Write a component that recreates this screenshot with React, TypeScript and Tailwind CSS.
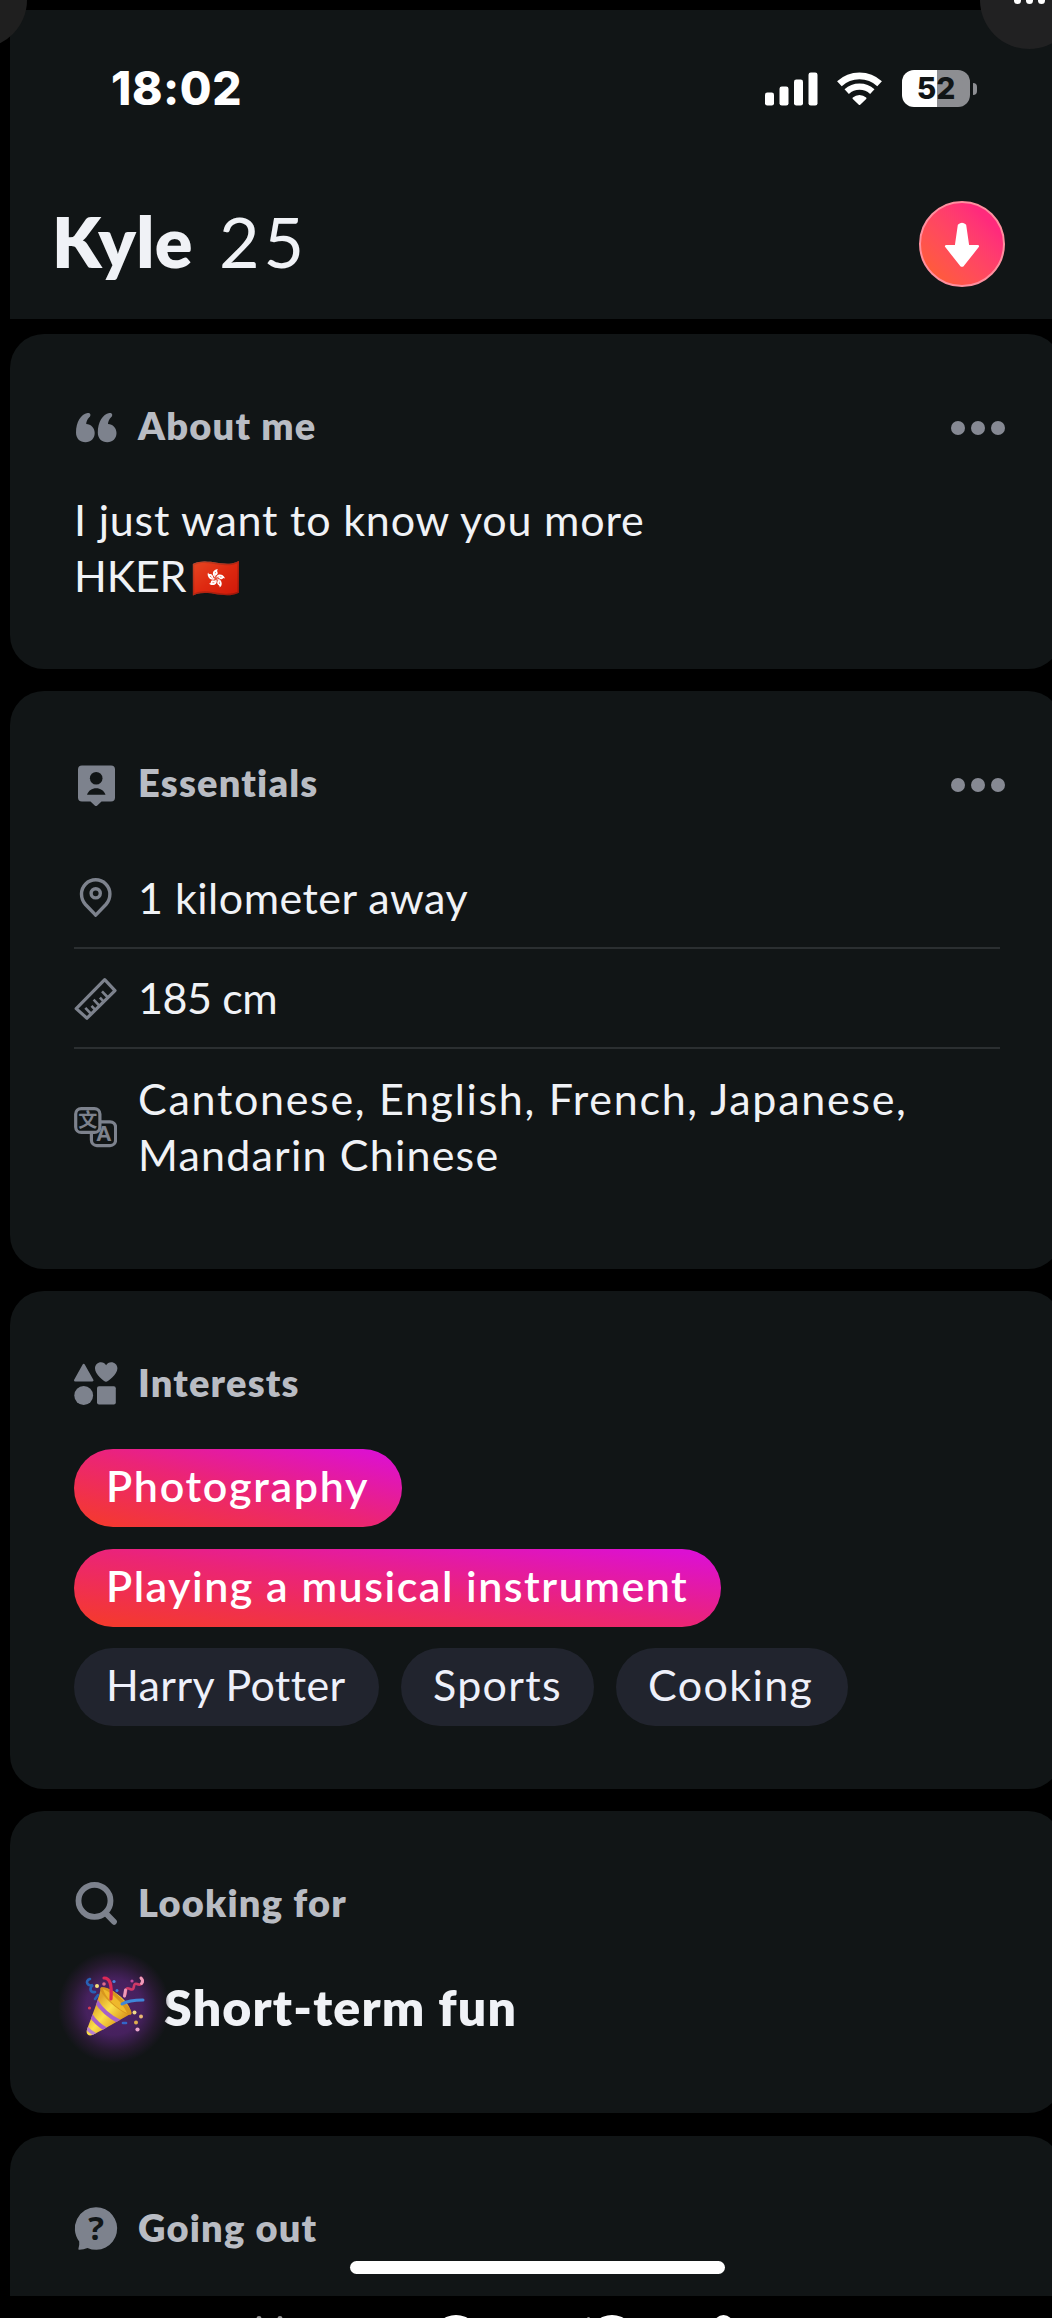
import type React from "react";

const ICON = "#7d828d";
const CARD = "#111516";

const QuoteIcon = () => (
	<svg width="43" height="43" viewBox="0 0 43 43" fill={ICON}>
		<path d="M2 28.5C2 18 7 10.3 13.5 9C16.8 8.5 17.2 11.3 15.3 13.3C13.3 15.4 12.3 17.6 12.2 20C17 20.2 20.7 24 20.7 29C20.7 34.4 16.8 38.3 11.5 38.3C6 38.3 2 34.5 2 28.5Z" />
		<path d="M23.8 28.5C23.8 18 28.8 10.3 35.3 9C38.6 8.5 39 11.3 37.1 13.3C35.1 15.4 34.1 17.6 34 20C38.8 20.2 42.5 24 42.5 29C42.5 34.4 38.6 38.3 33.3 38.3C27.8 38.3 23.8 34.5 23.8 28.5Z" />
	</svg>
);

const ProfileIcon = () => (
	<svg width="43" height="43" viewBox="0 0 43 43" className="overflow-visible">
		<path
			fill={ICON}
			d="M8 4.500H37A4 4 0 0 1 41 8.500V36.500A4 4 0 0 1 37 40.500H27.500L23 44.700Q22 45.400 21 44.700L16.500 40.500H8A4 4 0 0 1 4 36.500V8.500A4 4 0 0 1 8 4.500Z"
		/>
		<circle cx="22.2" cy="17.2" r="6.3" fill={CARD} />
		<path fill={CARD} d="M13 33.800C14.500 29.500 18 27.200 22.200 27.200S30 29.500 31.500 33.800Z" />
	</svg>
);

const ShapesIcon = () => (
	<svg width="43" height="43" viewBox="0 0 43 43" fill={ICON} className="overflow-visible">
		<path
			d="M9.700 4L18.300 19.300H1.200Z"
			stroke={ICON}
			strokeWidth="2.4"
			strokeLinejoin="round"
		/>
		<path d="M32 20.700C30 20.700 21 13.500 21 7.500C21 3.800 23.800 1.300 27 1.300C29.200 1.300 31 2.400 32.100 4.300C33.200 2.400 35 1.300 37.200 1.300C40.500 1.300 43.400 3.800 43.400 7.500C43.400 13.500 34 20.700 32 20.700Z" />
		<circle cx="9.7" cy="34.5" r="9.4" />
		<rect x="23" y="25.3" width="18.8" height="18.3" rx="2" />
	</svg>
);

const SearchIcon = () => (
	<svg width="43" height="43" viewBox="0 0 43 43" fill="none" stroke={ICON} className="overflow-visible">
		<circle cx="20.5" cy="19.8" r="16" strokeWidth="5.8" />
		<path d="M32 32.500L40 40.800" strokeWidth="5.8" strokeLinecap="round" />
	</svg>
);

const QuestionIcon = () => (
	<svg width="43" height="43" viewBox="0 0 43 43" className="overflow-visible">
		<path
			fill={ICON}
			d="M22.200 1.200A21 21.300 0 1 1 13.500 41.900Q9.500 43.600 5.500 43.800Q3.700 43.700 4.500 42.200Q5.600 38.800 5.200 35.500A21 21.300 0 0 1 22.200 1.200Z"
		/>
		<text
			x="22.2"
			y="34.2"
			textAnchor="middle"
			fill={CARD}
			className="font-['Open_Sans',sans-serif] text-[33px] font-bold"
		>
			?
		</text>
	</svg>
);

const PinIcon = () => (
	<svg width="43" height="43" viewBox="0 0 43 43" fill="none" stroke={ICON} strokeWidth="3.4">
		<path
			strokeLinejoin="round"
			d="M21.700 39.200L11.500 28.500C8.700 25.400 7.500 22 7.500 18A14.200 14.200 0 0 1 35.900 18C35.900 22 34.700 25.400 31.900 28.500Z"
		/>
		<circle cx="21.7" cy="17.3" r="4.6" />
	</svg>
);

const RulerIcon = () => (
	<svg width="43" height="43" viewBox="0 0 43 43" fill="none" stroke={ICON} strokeWidth="3.2">
		<path strokeLinejoin="round" d="M2.200 31.600L30.700 2.700L41 13.600L13 41.200Z" />
		<path
			strokeWidth="2.6"
			d="M17.200 37L11.300 30.800M21.300 32.900L17.500 28.900M25.500 28.800L19.600 22.600M29.700 24.700L25.900 20.700M33.900 20.500L28 14.300"
		/>
	</svg>
);

const LanguageIcon = () => (
	<svg width="43" height="43" viewBox="0 0 43 43" fill={CARD} stroke={ICON} strokeWidth="3.2">
		<rect x="17.4" y="16.8" width="24.2" height="23.8" rx="5.5" />
		<rect x="1.7" y="3.6" width="24.2" height="23.8" rx="5.5" />
		<text
			x="13.8"
			y="22"
			textAnchor="middle"
			fill={ICON}
			stroke="none"
			className="font-['Noto_Sans_CJK_SC',sans-serif] text-[19px] font-bold"
		>
			文
		</text>
		<text
			x="29.8"
			y="36"
			textAnchor="middle"
			fill={ICON}
			stroke="none"
			className="font-['Lato',sans-serif] text-[20px] font-extrabold"
		>
			A
		</text>
	</svg>
);

const PartyPopper = () => (
	<svg width="64" height="64" viewBox="0 0 64 64" fill="none" strokeLinecap="round" className="relative">
		<defs>
			<linearGradient id="cone" x1="14" y1="28" x2="38" y2="48" gradientUnits="userSpaceOnUse">
				<stop offset="0" stopColor="#e0a52a" />
				<stop offset="0.45" stopColor="#fbe04a" />
				<stop offset="1" stopColor="#dd9a1e" />
			</linearGradient>
			<clipPath id="coneClip">
				<path d="M19 12.500C17.500 22 9 44 4.700 55.500C4 59.500 7 61.500 10.500 60C21 55 38 45 49 38.500C50.500 30 31 11.500 19 12.500Z" />
			</clipPath>
		</defs>
		<g clipPath="url(#coneClip)">
			<rect width="64" height="64" fill="url(#cone)" />
			<path d="M14 26Q22 39 38 47" stroke="#a560c9" strokeWidth="4.2" />
			<path d="M8 39Q14 49 25 55" stroke="#a560c9" strokeWidth="4.2" />
			<path d="M3 51Q7 56 14 60" stroke="#b982cf" strokeWidth="3.5" />
		</g>
		<path d="M19 12.500C24 10.500 34 17 41 25S51 38 49 39.500S38 36 30 29S16 14 19 12.500Z" fill="#d8961d" />
		<path d="M21 14C29 17 41 28 45 38C37 35 24 24 21 14Z" fill="#efb92c" />
		<path d="M22 3C28 3 30 9 29 24" stroke="#dd2a57" strokeWidth="3.2" />
		<path d="M40 29C46 25.500 53 25 61 25" stroke="#3f86d8" strokeWidth="3" />
		<path d="M59 3C63 7 59 11 55 9C50 7 54 17 48 14C42 11 45 19 42.500 21" stroke="#cf3a67" strokeWidth="2.6" />
		<path d="M59 3C61 5 61 7 59.500 8.500M43.500 15L42.500 21" stroke="#ee9ab9" strokeWidth="3" />
		<path d="M8 4C2 6 6 12 11 10C7 13 8 18 13 17M16 20L13 24" stroke="#2861b5" strokeWidth="2.6" />
		<circle cx="15" cy="11" r="2" fill="#f6e07a" />
		<circle cx="22" cy="9" r="1.8" fill="#e06a8a" />
		<circle cx="32" cy="6.5" r="1.6" fill="#4c83dd" />
		<circle cx="35" cy="15.5" r="1.5" fill="#3f7fd8" />
		<circle cx="50" cy="6" r="1.6" fill="#c04a9a" />
		<circle cx="7.5" cy="33" r="1.6" fill="#d63b55" />
		<circle cx="52.5" cy="37.5" r="2" fill="#f2d98a" />
		<circle cx="59" cy="41.5" r="2" fill="#e8b873" />
		<circle cx="54" cy="47.5" r="2" fill="#dfae4e" />
		<circle cx="55.5" cy="54.5" r="2.1" fill="#eaa6cd" />
		<path d="M41 48H44" stroke="#3266c8" strokeWidth="2.6" />
	</svg>
);

const SignalIcon = () => (
	<svg width="53" height="34" viewBox="0 0 53 34" fill="#fff">
		<rect x="0" y="20.5" width="9" height="13" rx="2.3" />
		<rect x="14.5" y="14.5" width="9" height="19" rx="2.3" />
		<rect x="29" y="7.5" width="9" height="26" rx="2.3" />
		<rect x="43.5" y="0.5" width="9" height="33" rx="2.3" />
	</svg>
);

const WifiIcon = () => (
	<svg width="45" height="34" viewBox="0 0 45 34" fill="none" stroke="#fff">
		<path d="M2.400 11.700A29.500 29.500 0 0 1 42.600 11.700" strokeWidth="6.8" />
		<path d="M9.700 19.700A18.800 18.800 0 0 1 35.300 19.700" strokeWidth="6.4" />
		<path d="M22.500 32L16.500 26.200A9 9 0 0 1 28.500 26.200Z" fill="#fff" strokeWidth="2" strokeLinejoin="round" />
	</svg>
);

const Dots = () => (
	<div className="mt-[5px] -mr-[5px] ml-auto flex gap-[6px]">
		<span className="size-[14px] rounded-full bg-[#868993]" />
		<span className="size-[14px] rounded-full bg-[#868993]" />
		<span className="size-[14px] rounded-full bg-[#868993]" />
	</div>
);

interface CardProps {
	title: string;
	icon: React.ReactNode;
	menu?: boolean;
	className: string;
	children?: React.ReactNode;
}

const Card: React.FC<CardProps> = ({ title, icon, menu, className, children }) => (
	<section className={`w-[1052px] shrink-0 bg-[#111516] pt-[61px] pr-[62px] pl-16 ${className}`}>
		<div className="flex h-[60px] items-center">
			{icon}
			<h2 className="ml-[21px] text-[38px] leading-[60px] font-extrabold tracking-[1.2px] text-[#b9bcc3]">
				{title}
			</h2>
			{menu && <Dots />}
		</div>
		{children}
	</section>
);

const essentials = [
	{ icon: <PinIcon />, text: "1 kilometer away", className: "h-[101px] border-b-2 tracking-[0.5px]" },
	{ icon: <RulerIcon />, text: "185 cm", className: "h-[100px] border-b-2 tracking-[-0.4px]" },
	{
		icon: <LanguageIcon />,
		text: (
			<>
				<span className="tracking-[1.7px]">Cantonese, English, French, Japanese,</span>
				<br />
				<span className="tracking-[1.2px]">Mandarin Chinese</span>
			</>
		),
		className: "h-[155px]",
	},
];

// Shared interests each take a row of their own
const shared = [
	{ label: "Photography", className: "w-[328px] tracking-[1.7px]" },
	{ label: "Playing a musical instrument", className: "w-[647px] tracking-[1.5px]" },
];

const interests = [
	{ label: "Harry Potter", className: "w-[305px] tracking-[0.4px]" },
	{ label: "Sports", className: "w-[193px] tracking-[1.3px]" },
	{ label: "Cooking", className: "w-[232px] tracking-[1.4px]" },
];

export default function App() {
	return (
		<div className="relative h-[2318px] w-[1052px] overflow-hidden bg-black pt-[10px] pl-[10px] font-['Lato',sans-serif] text-[#f0f2f6]">
			{/* Status bar + name */}
			<header className="h-[309px] bg-[#111516] pt-[58px]">
				<div className="flex h-[41px] items-center pr-[75px] pl-[101px] text-white">
					<span className="font-['Inter',sans-serif] text-[46px] font-extrabold tracking-[0.6px]">18:02</span>
					<div className="ml-auto flex items-center">
						<SignalIcon />
						<div className="ml-[19px]">
							<WifiIcon />
						</div>
						<div className="ml-[20px] flex h-[37px] w-[68px] items-center justify-center rounded-[12px] bg-linear-to-r from-white from-52% to-[#8d8e92] to-52% font-['Inter',sans-serif] text-[30px] font-extrabold text-[#111516]">
							52
						</div>
						<span className="ml-[3px] h-[12px] w-[4px] rounded-r-full bg-[#8d8e92]" />
					</div>
				</div>
				<div className="mt-[92px] flex h-[86px] items-center pr-[47px] pl-[42px]">
					<h1 className="pb-1.5 text-[70px] leading-[80px] font-extrabold tracking-[0.4px]">
						Kyle
						<span className="ml-[26px] font-normal tracking-[4px]">25</span>
					</h1>
					<button
						type="button"
						className="ml-auto size-[86px] rounded-full border-2 border-[#ff8f9f] bg-linear-to-tr from-[#ff5a3c] from-15% to-[#ff2a7c] to-80%"
					>
						<svg width="82" height="82" viewBox="2 2 82 82" fill="#fff">
							<path
								d="M40 24.500Q43 21.500 46 24.500L49 45.300H58.800L44 64Q43 65 42 64L27.200 45.300H37Z"
								stroke="#fff"
								strokeWidth="2.5"
								strokeLinejoin="round"
							/>
						</svg>
					</button>
				</div>
			</header>

			<main className="mt-[15px] flex flex-col gap-[22px]">
				<Card title="About me" icon={<QuoteIcon />} menu className="h-[335px] rounded-[34px]">
					<p className="mt-[37px] text-[43px] leading-[55.5px] tracking-[0.8px]">
						I just want to know you more
						<br />
						<span className="tracking-[-0.2px]">HKER</span>
						<span className="ml-[5px] text-[40px] leading-none">🇭🇰</span>
					</p>
				</Card>

				<Card title="Essentials" icon={<ProfileIcon />} menu className="h-[578px] rounded-[34px]">
					<ul className="mt-[36px] text-[43px] leading-[55.5px]">
						{essentials.map((item, i) => (
							<li key={i} className={`flex items-center border-[#2b2f31] ${item.className}`}>
								{item.icon}
								<span className="ml-[21px] whitespace-nowrap">{item.text}</span>
							</li>
						))}
					</ul>
				</Card>

				<Card title="Interests" icon={<ShapesIcon />} className="h-[498px] rounded-[34px]">
					<div className="mt-[37px] flex flex-col items-start gap-[21.5px] text-[43px] whitespace-nowrap">
						{shared.map((item) => (
							<span
								key={item.label}
								className={`flex h-[78px] items-center rounded-full bg-[linear-gradient(to_top_right,#f4392f_5%,#eb2477_50%,#dc10d2_95%)] pb-[3px] pl-8 font-semibold text-white ${item.className}`}
							>
								{item.label}
							</span>
						))}
						<div className="flex gap-[22px]">
							{interests.map((item) => (
								<span
									key={item.label}
									className={`flex h-[78px] items-center rounded-full bg-[#21242e] pb-[3px] pl-8 text-[#eef0fa] ${item.className}`}
								>
									{item.label}
								</span>
							))}
						</div>
					</div>
				</Card>

				<Card title="Looking for" icon={<SearchIcon />} className="h-[302px] rounded-[34px]">
					<div className="mt-[37px] flex h-[76px] items-center">
						<div className="relative ml-2 size-[64px]">
							<div className="absolute -inset-6 bg-[radial-gradient(circle_closest-side,#4f2469_0%,#46215e_50%,#26192f_78%,transparent_100%)]" />
							<PartyPopper />
						</div>
						<p className="ml-[18px] text-[50px] leading-[76px] font-extrabold tracking-[1.2px]">Short-term fun</p>
					</div>
				</Card>

				<Card title="Going out" icon={<QuestionIcon />} className="mt-px h-[160px] rounded-t-[34px]" />
			</main>

			{/* Labels cut off by the bottom edge */}
			<svg width="1042" height="22" viewBox="10 2296 1042 22" fill="#fff">
				<circle cx="259" cy="2318.5" r="2.5" fill="#999" />
				<circle cx="280" cy="2318.5" r="2.5" fill="#999" />
				<circle cx="456" cy="2338.5" r="23.5" />
				<circle cx="588.5" cy="2318.5" r="1.5" fill="#999" />
				<circle cx="612" cy="2338.5" r="23.5" />
				<circle cx="723.5" cy="2324.5" r="9.5" />
			</svg>

			{/* Home indicator */}
			<div className="absolute top-[2261px] left-[350px] h-[13px] w-[375px] rounded-full bg-white" />

			{/* Floating viewer buttons */}
			<div className="absolute -top-[48px] -left-[69px] size-24 rounded-full bg-[#1f1f1f]" />
			<div className="absolute -top-[49px] left-[980px] flex size-[98px] items-center justify-center gap-[5px] rounded-full bg-[#212122]">
				<span className="size-[7px] rounded-full bg-white" />
				<span className="size-[7px] rounded-full bg-white" />
				<span className="size-[7px] rounded-full bg-white" />
			</div>
		</div>
	);
}
